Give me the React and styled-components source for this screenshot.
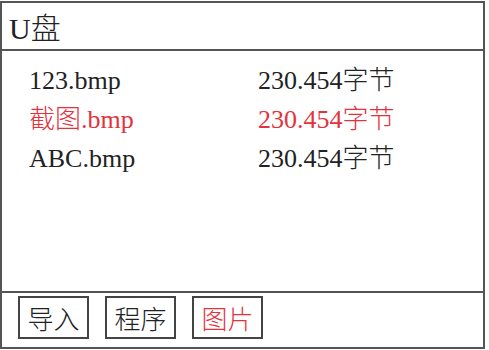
import React from "react";
import styled, { createGlobalStyle } from "styled-components";

const Global = createGlobalStyle`
  html, body { margin: 0; padding: 0; background: #fff; }
  * { box-sizing: border-box; }
`;

const RED = "#e4323d";
const INK = "#222";
const LINE = "#555";

const Frame = styled.div`
  width: 485px;
  height: 348px;
  margin-top: 1px;
  border: 2px solid ${LINE};
  display: flex;
  flex-direction: column;
  font-family: "Liberation Serif", "Noto Sans CJK SC", serif;
  color: ${INK};
`;

const Header = styled.div`
  height: 48px;
  border-bottom: 2px solid ${LINE};
  display: flex;
  align-items: center;
  padding-left: 7px;
  font-size: 30px;
  font-weight: 300;
`;

const List = styled.div`
  flex: 1;
  padding: 10px 0 0 27px;
  display: grid;
  grid-template-columns: 229px auto;
  grid-auto-rows: 39px;
  align-content: start;
  font-size: 26px;
  line-height: 39px;
  font-weight: 300;
`;

const Cell = styled.div`
  color: ${(p) => (p.$active ? RED : INK)};
  white-space: nowrap;
`;

const Footer = styled.div`
  height: 56px;
  border-top: 2px solid ${LINE};
  display: flex;
  gap: 16px;
  padding: 3px 0 0 16px;
`;

const Tab = styled.div`
  width: 71px;
  height: 43px;
  border: 2px solid #444;
  display: flex;
  align-items: center;
  justify-content: center;
  font-family: "Noto Sans CJK SC", sans-serif;
  font-size: 26px;
  font-weight: 300;
  line-height: 1;
  color: ${(p) => (p.$active ? RED : INK)};
`;

const files = [
  { name: "123.bmp", size: "230.454字节" },
  { name: "截图.bmp", size: "230.454字节", active: true },
  { name: "ABC.bmp", size: "230.454字节" },
];

const tabs = [
  { label: "导入" },
  { label: "程序" },
  { label: "图片", active: true },
];

export default function App() {
  return (
    <>
      <Global />
      <Frame>
        <Header>U盘</Header>
        <List>
          {files.map((f) => (
            <React.Fragment key={f.name}>
              <Cell $active={f.active}>{f.name}</Cell>
              <Cell $active={f.active}>{f.size}</Cell>
            </React.Fragment>
          ))}
        </List>
        <Footer>
          {tabs.map((t) => (
            <Tab key={t.label} $active={t.active}>
              {t.label}
            </Tab>
          ))}
        </Footer>
      </Frame>
    </>
  );
}
